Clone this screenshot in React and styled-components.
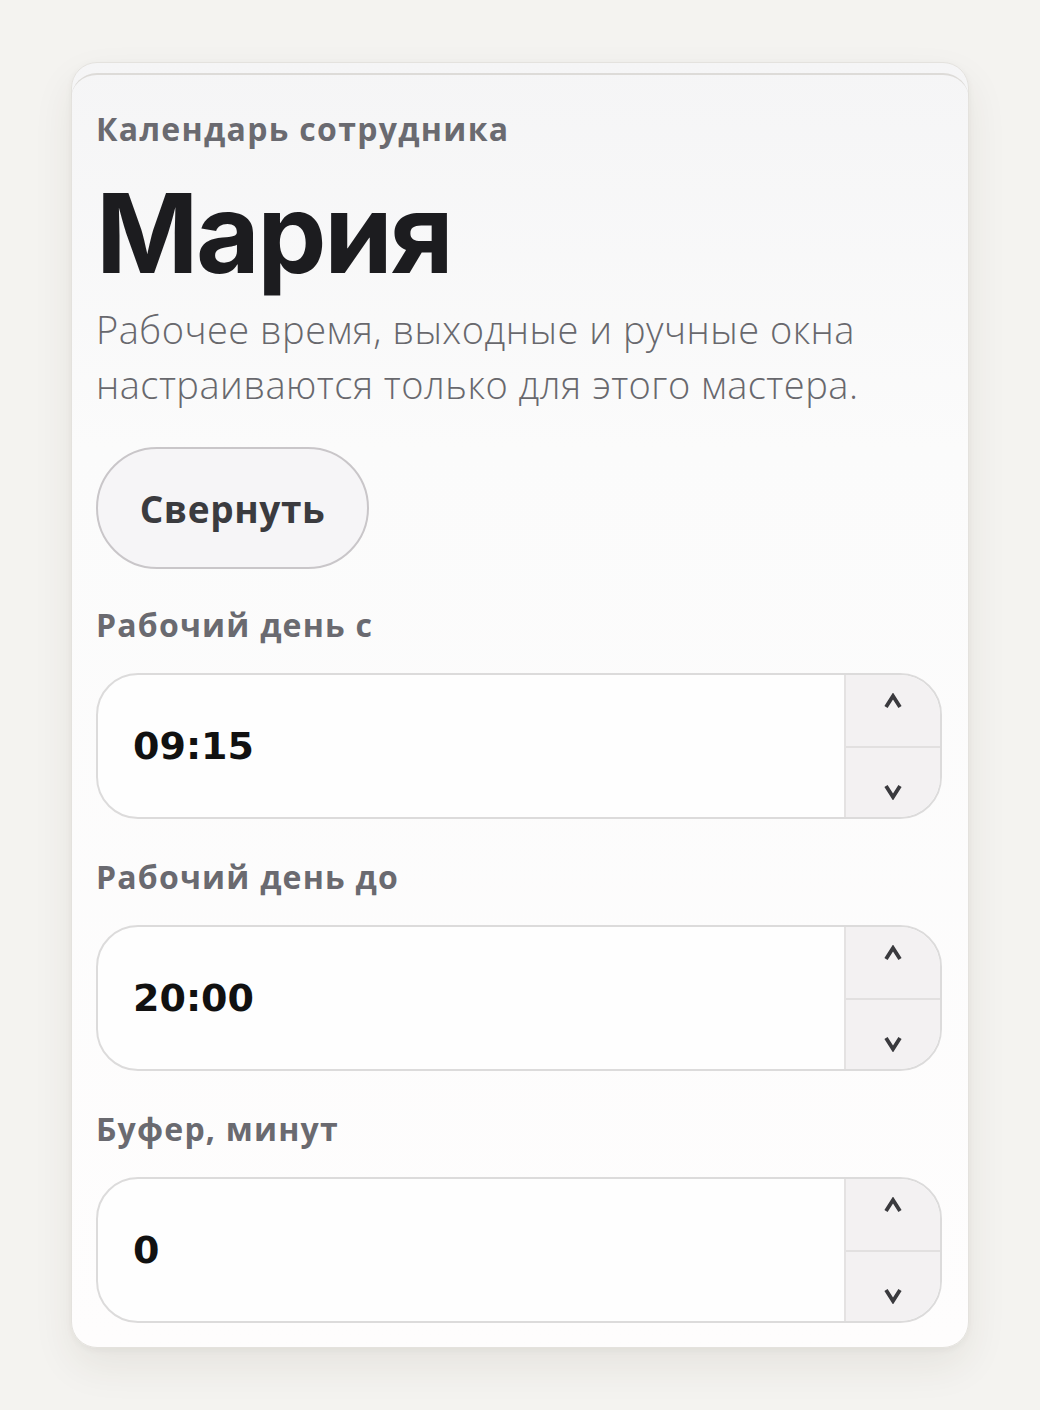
import React from 'react';
import styled, { createGlobalStyle } from 'styled-components';

const GlobalStyle = createGlobalStyle`
  html, body {
    margin: 0;
    padding: 0;
    background: #f4f3f0;
  }
  body {
    font-family: "Open Sans", "Noto Sans", sans-serif;
  }
`;

const Page = styled.div`
  width: 1040px;
  height: 1410px;
  box-sizing: border-box;
  padding: 62px 71px 0 71px;
`;

const Card = styled.section`
  position: relative;
  box-sizing: border-box;
  width: 898px;
  height: 1286px;
  padding: 48px 26px 0 24px;
  border-radius: 26px;
  background: linear-gradient(180deg, #f5f5f6 0%, #fbfbfb 30%, #fefdfd 100%);
  border: 1px solid #e4e2de;
  box-shadow: 0 18px 40px rgba(60, 50, 30, 0.08), 0 2px 6px rgba(60, 50, 30, 0.05);
  display: flex;
  flex-direction: column;

  &::before {
    content: '';
    position: absolute;
    left: -1px;
    right: -1px;
    top: 10px;
    height: 30px;
    border-top: 2px solid #dddbd8;
    border-radius: 26px 26px 0 0;
  }
`;

const Eyebrow = styled.div`
  font-size: 32px;
  font-weight: 700;
  letter-spacing: 1.3px;
  color: #6a6a70;
  line-height: 36px;
`;

const Title = styled.h1`
  margin: 26px 0 0 0;
  font-family: "Inter", sans-serif;
  font-size: 110px;
  font-weight: 700;
  letter-spacing: -2.5px;
  color: #1c1c1f;
  line-height: 120px;
`;

const Lead = styled.p`
  margin: 9px 0 0 0;
  font-size: 38px;
  font-weight: 300;
  letter-spacing: 0.5px;
  color: #68686d;
  line-height: 55px;
`;

const Toggle = styled.button`
  margin-top: 35px;
  align-self: flex-start;
  width: 273px;
  height: 122px;
  border-radius: 61px;
  border: 2px solid #c9c6c9;
  background: #f6f5f7;
  font-family: "Open Sans", sans-serif;
  font-size: 37px;
  font-weight: 700;
  letter-spacing: 0.6px;
  color: #3b3b3f;
  cursor: pointer;
`;

const Field = styled.div`
  margin-top: ${p => p.$first ? 36 : 38}px;
  display: flex;
  flex-direction: column;
  gap: 28px;
`;

const Label = styled.label`
  font-size: 32px;
  font-weight: 700;
  letter-spacing: 1.2px;
  color: #6a6a70;
  line-height: 40px;
`;

const NumberBox = styled.div`
  display: flex;
  height: 146px;
  box-sizing: border-box;
  border: 2px solid #dcdbdb;
  border-radius: 42px;
  background: #fefefe;
  overflow: hidden;
`;

const Value = styled.div`
  flex: 1;
  display: flex;
  align-items: center;
  padding-left: 35px;
  font-family: "DejaVu Sans", sans-serif;
  font-size: 38px;
  font-weight: 700;
  color: #111;
`;

const Spinner = styled.div`
  width: 94px;
  display: flex;
  flex-direction: column;
  border-left: 2px solid #e4e2e2;
  background: #f3f1f2;
`;

const Step = styled.div`
  flex: 1;
  display: flex;
  justify-content: center;
  align-items: ${p => p.$up ? 'flex-start' : 'flex-end'};
  padding: ${p => p.$up ? '18px 0 0 0' : '0 0 17px 0'};
  border-top: ${p => p.$up ? 'none' : '2px solid #e2e0e0'};
`;

const Chevron = ({ up }) => (
  <svg width="20" height="16" viewBox="0 0 20 16">
    <path
      d={up ? 'M3 14 L10 3 L17 14' : 'M3 2 L10 13 L17 2'}
      fill="none"
      stroke="#3a3a3e"
      strokeWidth="3.8"
      strokeLinejoin="miter"
    />
  </svg>
);

const NumberField = ({ label, value, first }) => (
  <Field $first={first}>
    <Label>{label}</Label>
    <NumberBox>
      <Value>{value}</Value>
      <Spinner>
        <Step $up>
          <Chevron up />
        </Step>
        <Step>
          <Chevron />
        </Step>
      </Spinner>
    </NumberBox>
  </Field>
);

const App = () => (
  <>
    <GlobalStyle />
    <Page>
      <Card>
        <Eyebrow>Календарь сотрудника</Eyebrow>
        <Title>Мария</Title>
        <Lead>
          Рабочее время, выходные и ручные окна
          <br />
          настраиваются только для этого мастера.
        </Lead>
        <Toggle>Свернуть</Toggle>
        <NumberField first label="Рабочий день с" value="09:15" />
        <NumberField label="Рабочий день до" value="20:00" />
        <NumberField label="Буфер, минут" value="0" />
      </Card>
    </Page>
  </>
);

export default App;
